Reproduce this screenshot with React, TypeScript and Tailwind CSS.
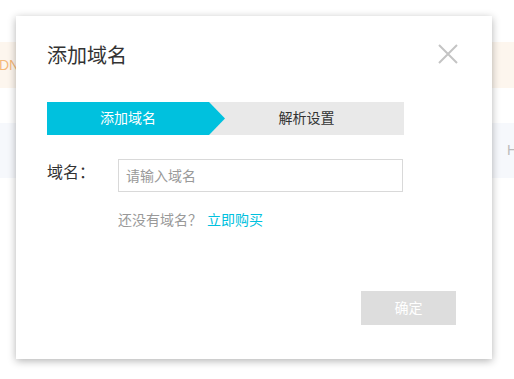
export default function App() {
  return (
    <div
      className="relative w-[514px] h-[379px] overflow-hidden bg-white"
      style={{ fontFamily: '"Liberation Sans", "Noto Sans CJK SC", sans-serif' }}
    >
      {/* page behind the dialog */}
      <div className="h-[42px]" />
      <div className="h-[46px] bg-[#fdf6ee] flex items-center text-[14px] text-[#f5b97a]">
        <span className="-ml-[1px]">DN</span>
      </div>
      <div className="h-[35px]" />
      <div className="h-[55px] bg-[#f6f8fc] flex items-center pl-[507px] text-[14px] text-[#bbb] whitespace-nowrap">
        <span>HTTP</span>
      </div>

      {/* dialog */}
      <div className="absolute left-[16px] top-[16px] w-[476px] h-[343px] bg-white shadow-[0_2px_8px_rgba(0,0,0,0.3)] pl-[31px] pr-[36px] pt-[26px]">
        <div className="flex items-center justify-between">
          <h2 className="text-[20px] leading-[28px] text-[#333]">添加域名</h2>
          <svg className="mr-[-3px] mt-[-4px]" width="22" height="22" viewBox="0 0 22 22">
            <path d="M2 2 L20 20 M20 2 L2 20" stroke="#c4c4c4" strokeWidth="2" fill="none" />
          </svg>
        </div>

        {/* steps */}
        <div className="mt-[32px] flex w-[357px] h-[33px] bg-[#e9e9e9] text-[14px]">
          <div className="relative w-[162px] bg-[#00c1de] text-white flex items-center justify-center">
            添加域名
            <svg className="absolute left-full top-0" width="16" height="33" viewBox="0 0 16 33">
              <polygon points="0,0 16,16.5 0,33" fill="#00c1de" />
            </svg>
          </div>
          <div className="flex-1 flex items-center justify-center text-[#333]">解析设置</div>
        </div>

        {/* field */}
        <div className="mt-[24px] flex items-center">
          <label className="w-[71px] text-[16px] text-[#333] -mt-[6px]">域名：</label>
          <input
            className="w-[285px] h-[33px] border border-[#d9d9d9] px-[7px] text-[14px] text-[#333] placeholder:text-[#999] outline-none"
            placeholder="请输入域名"
          />
        </div>

        <div className="mt-[18px] ml-[71px] text-[14px] leading-[20px] text-[#999]">
          还没有域名？
          <a className="text-[#00c1de] ml-[5px]" href="#">立即购买</a>
        </div>

        <div className="mt-[61px] flex justify-end">
          <button
            type="button"
            className="w-[95px] h-[34px] bg-[#dddddd] text-white text-[14px]"
          >
            确定
          </button>
        </div>
      </div>
    </div>
  );
}
